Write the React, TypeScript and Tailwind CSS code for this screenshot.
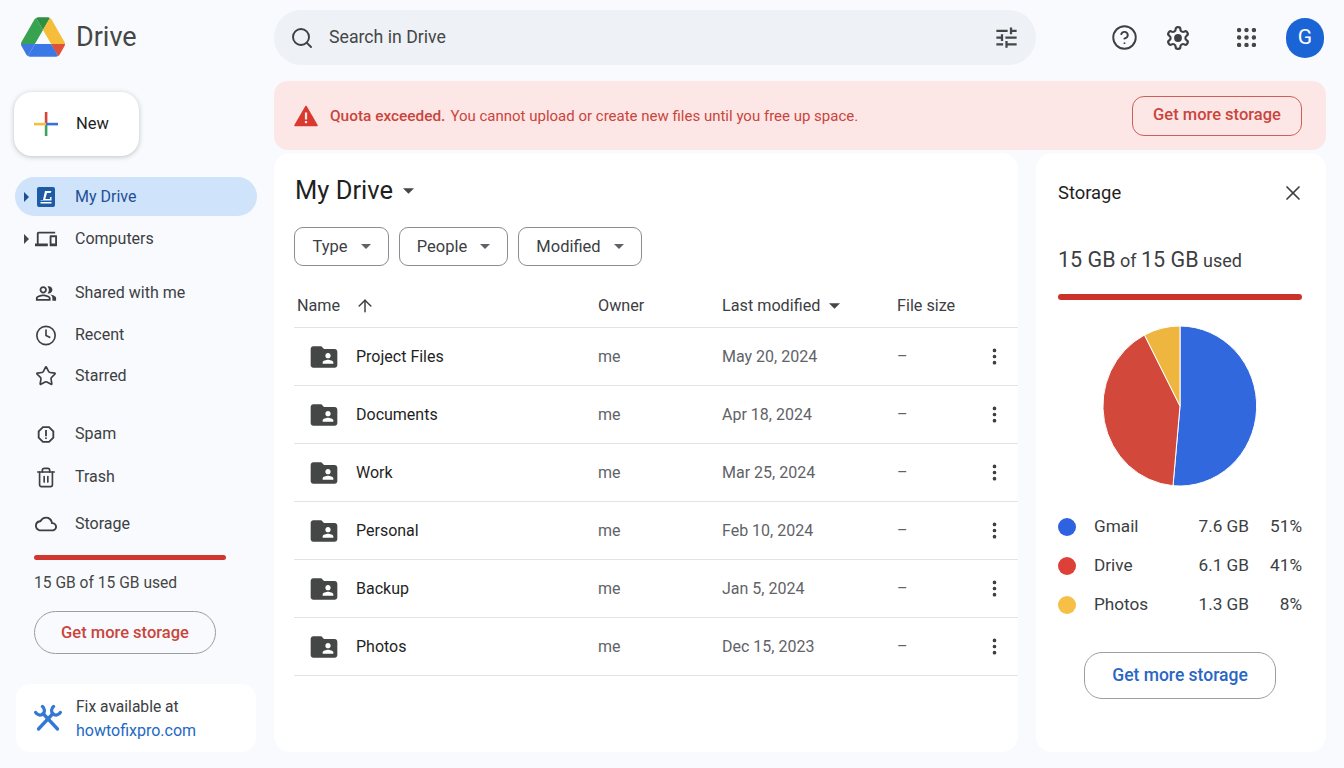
import React from 'react';
import { ArrowUp, CircleHelp, Clock, EllipsisVertical, Search, Star, Trash2, X } from 'lucide-react';
import { MdFolderShared, MdOutlineCloud, MdOutlineDevices, MdOutlinePeopleAlt, MdOutlineReport, MdTune } from 'react-icons/md';

const files = [
  { name: 'Project Files', modified: 'May 20, 2024' },
  { name: 'Documents', modified: 'Apr 18, 2024' },
  { name: 'Work', modified: 'Mar 25, 2024' },
  { name: 'Personal', modified: 'Feb 10, 2024' },
  { name: 'Backup', modified: 'Jan 5, 2024' },
  { name: 'Photos', modified: 'Dec 15, 2023' },
];

const usage = [
  { label: 'Gmail', size: '7.6 GB', pct: '51%', dot: 'bg-[#2f62e0]' },
  { label: 'Drive', size: '6.1 GB', pct: '41%', dot: 'bg-[#dc4037]' },
  { label: 'Photos', size: '1.3 GB', pct: '8%', dot: 'bg-[#f6bf45]' },
];

const Caret = ({ className = '' }: { className?: string }) => (
  <svg viewBox="0 0 10 5" className={className} fill="currentColor">
    <path d="M0 0h10L5 5z" />
  </svg>
);

const SideCaret = () => (
  <svg viewBox="0 0 5 10" className="w-[5px] h-[10px]" fill="currentColor">
    <path d="M0 0l5 5-5 5z" />
  </svg>
);

const DriveLogo = () => (
  <svg viewBox="0 0 87.3 78" className="w-[44px] h-[40px]">
    <path d="m6.6 66.85 3.85 6.65c.8 1.4 1.95 2.5 3.3 3.3l13.75-23.8h-27.5c0 1.55.4 3.1 1.2 4.5z" fill="#3f78e0" />
    <path d="m43.65 25-13.75-23.8c-1.35.8-2.5 1.9-3.3 3.3l-25.4 44a9.06 9.06 0 0 0 -1.2 4.5h27.5z" fill="#37a24f" />
    <path d="m73.55 76.8c1.35-.8 2.5-1.9 3.3-3.3l1.6-2.75 7.65-13.25c.8-1.4 1.2-2.95 1.2-4.5h-27.502l5.852 11.5z" fill="#df5138" />
    <path d="m43.65 25 13.75-23.8c-1.35-.8-2.9-1.2-4.5-1.2h-18.5c-1.6 0-3.15.45-4.5 1.2z" fill="#2f8f40" />
    <path d="m59.8 53h-32.3l-13.75 23.8c1.35.8 2.9 1.2 4.5 1.2h50.8c1.6 0 3.15-.45 4.5-1.2z" fill="#3b78e7" />
    <path d="m73.4 26.5-12.7-22c-.8-1.4-1.95-2.5-3.3-3.3l-13.75 23.8 16.15 28h27.45c0-1.55-.4-3.1-1.2-4.5z" fill="#f6bd3b" />
  </svg>
);

const ColorPlus = () => (
  <svg viewBox="0 0 24 24" className="w-[24px] h-[24px]">
    <rect x="10.8" y="0" width="2.6" height="12" fill="#d6453a" />
    <rect x="10.8" y="12" width="2.6" height="12" fill="#3fa45b" />
    <rect x="0" y="10.8" width="12" height="2.6" fill="#f2bf42" />
    <rect x="12" y="10.8" width="12" height="2.6" fill="#3d6fd8" />
  </svg>
);

const MyDriveIcon = () => (
  <svg viewBox="0 0 18 20" className="w-[18px] h-[20px]">
    <rect width="18" height="20" rx="2" fill="#1f5aa6" />
    <path d="M8 4h6.500l-1 2H10L8.300 12H13v-2h1.500v3.500H3.500V15H14.500v1.500H3.500v-3.500H6z" fill="#fff" />
  </svg>
);

const GearIcon = () => (
  <svg viewBox="0 0 24 24" className="w-[26px] h-[26px]" fill="none" stroke="currentColor" strokeWidth="2">
    <path d="M12.22 2h-.44a2 2 0 0 0-2 2v.18a2 2 0 0 1-1 1.73l-.43.25a2 2 0 0 1-2 0l-.15-.08a2 2 0 0 0-2.73.73l-.22.38a2 2 0 0 0 .73 2.73l.15.1a2 2 0 0 1 1 1.72v.51a2 2 0 0 1-1 1.74l-.15.09a2 2 0 0 0-.73 2.73l.22.38a2 2 0 0 0 2.73.73l.15-.08a2 2 0 0 1 2 0l.43.25a2 2 0 0 1 1 1.73V20a2 2 0 0 0 2 2h.44a2 2 0 0 0 2-2v-.18a2 2 0 0 1 1-1.73l.43-.25a2 2 0 0 1 2 0l.15.08a2 2 0 0 0 2.73-.73l.22-.39a2 2 0 0 0-.73-2.73l-.15-.08a2 2 0 0 1-1-1.74v-.5a2 2 0 0 1 1-1.74l.15-.09a2 2 0 0 0 .73-2.73l-.22-.38a2 2 0 0 0-2.73-.73l-.15.08a2 2 0 0 1-2 0l-.43-.25a2 2 0 0 1-1-1.73V4a2 2 0 0 0-2-2z" />
    <circle cx="12" cy="12" r="3.6" fill="currentColor" stroke="none" />
  </svg>
);

const AppsIcon = () => (
  <svg viewBox="0 0 18 18" className="w-[19px] h-[19px]" fill="currentColor">
    {[2, 9, 16].map(y => [2, 9, 16].map(x => <circle key={`${x}-${y}`} cx={x} cy={y} r="2.1" />))}
  </svg>
);

const WarningIcon = () => (
  <svg viewBox="0 0 24 22" className="w-[24px] h-[22px]">
    <path d="M12 1.5 23 20.5H1z" fill="#d93a30" stroke="#d93a30" strokeWidth="1.5" strokeLinejoin="round" />
    <rect x="10.9" y="7.5" width="2.2" height="7" fill="#fde7e6" />
    <rect x="10.9" y="16" width="2.2" height="2.2" fill="#fde7e6" />
  </svg>
);

const ToolsIcon = () => (
  <svg viewBox="0 0 28 28" className="w-[28px] h-[28px]" fill="none" stroke="#3478d4" strokeWidth="3.3" strokeLinecap="round">
    <path d="M4.500 25 L19 9.500" />
    <path d="M23.500 25 L9 9.500" />
    <path d="M19.500 2.500c-2.500 2-2.500 5.500-.5 7.500 2.300 1.800 5.800 1.200 7.300-1.500" />
    <path d="M8.500 2.500c2.500 2 2.500 5.500.5 7.500-2.300 1.800-5.800 1.200-7.300-1.500" />
  </svg>
);

const StoragePie = () => (
  <svg viewBox="-78 -81 156 162" className="w-[156px] h-[162px]">
    <path d="M0 0L0-80A77 80 0 1 1-7 79.700Z" fill="#3268dd" stroke="#fff" />
    <path d="M0 0L-7 79.700A77 80 0 0 1-35.500-71Z" fill="#d2493c" stroke="#fff" />
    <path d="M0 0L-35.500-71A77 80 0 0 1 0-80Z" fill="#efb63f" stroke="#fff" />
  </svg>
);

const NavRow = ({ icon, label, caret, height }: { icon: React.ReactNode; label: string; caret?: boolean; height: string }) => (
  <div className={`flex items-center ml-[15px] ${height}`}>
    <span className="w-[20px] pl-[9px] text-[#444746]">{caret && <SideCaret />}</span>
    <span className="w-[22px] flex justify-center text-[#3c4043]">{icon}</span>
    <span className="ml-[18px] text-[#3c4043]">{label}</span>
  </div>
);

const FilterChip = ({ label, width }: { label: string; width: string }) => (
  <div className={`h-[39px] flex items-center justify-center gap-[13px] rounded-[9px] border border-[#8a8d91] text-[16.5px] text-[#3c4043] ${width}`}>
    <span className="pt-[1px]">{label}</span>
    <Caret className="w-[10px] h-[5px] text-[#5f6368]" />
  </div>
);

export default function App() {
  return (
    <div className="w-[1344px] h-[768px] flex overflow-hidden bg-[#f8fafd] text-[16px] text-[#1f1f1f] font-['Roboto',sans-serif]">
      {/* Sidebar */}
      <aside className="w-[274px] shrink-0 flex flex-col">
        <div className="flex items-center pl-[21px] pt-[17px] h-[57px]">
          <DriveLogo />
          <span className="ml-[11px] pt-[1px] text-[27px] text-[#444746]">Drive</span>
        </div>
        <button className="mt-[35px] ml-[14px] w-[125px] h-[64px] flex items-center pl-[20px] rounded-[18px] bg-white shadow-[0_1px_5px_rgba(60,64,67,0.3)] text-[16.5px] text-[#1f1f1f]">
          <ColorPlus />
          <span className="ml-[18px]">New</span>
        </button>

        <div className="mt-[21px] ml-[15px] w-[242px] h-[39px] flex items-center rounded-full bg-[#cfe3fa] text-[#1f4f96]">
          <span className="w-[20px] pl-[9px]"><SideCaret /></span>
          <span className="w-[22px] flex justify-center"><MyDriveIcon /></span>
          <span className="ml-[18px]">My Drive</span>
        </div>
        <NavRow icon={<MdOutlineDevices size={26} />} label="Computers" caret height="h-[46px]" />

        <div className="mt-[10px]">
          <NavRow icon={<MdOutlinePeopleAlt size={27} />} label="Shared with me" height="h-[42px]" />
          <NavRow icon={<Clock size={23} strokeWidth={1.8} />} label="Recent" height="h-[42px]" />
          <NavRow icon={<Star size={22} strokeWidth={1.8} />} label="Starred" height="h-[40px]" />
        </div>
        <div className="mt-[17px]">
          <NavRow icon={<MdOutlineReport size={27} />} label="Spam" height="h-[42px]" />
          <NavRow icon={<Trash2 size={23} strokeWidth={1.8} />} label="Trash" height="h-[44px]" />
          <NavRow icon={<MdOutlineCloud size={26} />} label="Storage" height="h-[50px]" />
        </div>

        <div className="mt-[6px] ml-[34px] w-[192px] h-[5px] rounded-full bg-[#d2372f]" />
        <p className="mt-[12px] ml-[34px] text-[15.6px] text-[#444746]">15 GB of 15 GB used</p>
        <button className="mt-[16px] ml-[34px] w-[182px] h-[43px] rounded-full border border-[#9a9da1] text-[16.5px] text-[#c9453c] font-medium">
          Get more storage
        </button>
        <div className="mt-[30px] ml-[16px] w-[240px] h-[68px] flex items-center pl-[18px] rounded-[14px] bg-white">
          <ToolsIcon />
          <div className="ml-[14px] pt-[1px] leading-[23px]">
            <div className="text-[15.6px] text-[#3c4043]">Fix available at</div>
            <div className="text-[#2368c4]">howtofixpro.com</div>
          </div>
        </div>
      </aside>

      {/* Main column */}
      <div className="w-[1052px] shrink-0 flex flex-col">
        <div className="flex items-center pt-[10px]">
          <div className="w-[762px] h-[55px] flex items-center pl-[16px] pr-[16px] rounded-full bg-[#eef1f6]">
            <Search size={24} strokeWidth={1.9} className="text-[#3c4043]" />
            <span className="ml-[15px] text-[17.7px] text-[#444746]">Search in Drive</span>
            <MdTune size={27} className="ml-auto text-[#444746]" />
          </div>
          <CircleHelp size={27} strokeWidth={1.7} className="ml-[75px] text-[#3c4043]" />
          <span className="ml-[27px] text-[#3c4043]"><GearIcon /></span>
          <span className="ml-[46px] text-[#444746]"><AppsIcon /></span>
          <div className="ml-[30px] w-[38px] h-[40px] flex items-center justify-center rounded-full bg-[#1a64d6] text-[#fff] text-[21px]">G</div>
        </div>

        <div className="mt-[16px] h-[69px] flex items-center pl-[20px] pr-[24px] rounded-[14px] bg-[#fde7e6] text-[#c9453c]">
          <WarningIcon />
          <span className="ml-[12px] pt-[2px] text-[15.4px] font-medium">Quota exceeded.</span>
          <span className="ml-[5px] pt-[2px] text-[15px]">You cannot upload or create new files until you free up space.</span>
          <button className="ml-auto w-[170px] h-[40px] rounded-[12px] border border-[#c9605a] text-[16.5px] font-medium">Get more storage</button>
        </div>

        <div className="mt-[3px] h-[599px] flex gap-[18px]">
          {/* File list */}
          <main className="w-[744px] rounded-[16px] bg-white pl-[20px]">
            <div className="h-[74px] flex items-center pt-[1px] text-[25.5px] text-[#1f1f1f]">
              <span className="ml-[1px]">My Drive</span>
              <Caret className="ml-[10px] w-[11px] h-[6px] text-[#444746]" />
            </div>
            <div className="flex gap-[10px]">
              <FilterChip label="Type" width="w-[95px]" />
              <FilterChip label="People" width="w-[109px]" />
              <FilterChip label="Modified" width="w-[124px]" />
            </div>
            <div className="mt-[20px] h-[42px] flex items-center border-b border-[#e3e3e3] text-[16.2px] text-[#3c4043]">
              <div className="w-[304px] flex items-center pl-[3px]">
                Name
                <ArrowUp size={20} strokeWidth={1.8} className="ml-[15px]" />
              </div>
              <div className="w-[124px]">Owner</div>
              <div className="w-[175px] flex items-center">
                Last modified
                <Caret className="ml-[9px] w-[11px] h-[6px] text-[#444746]" />
              </div>
              <div>File size</div>
            </div>
            {files.map(file => (
              <div key={file.name} className="h-[58px] flex items-center border-b border-[#e3e3e3]">
                <div className="w-[304px] flex items-center pl-[14px]">
                  <MdFolderShared size={32} className="text-[#444746]" />
                  <span className="ml-[16px] text-[#1f1f1f]">{file.name}</span>
                </div>
                <div className="w-[124px] text-[#5f6368]">me</div>
                <div className="w-[175px] text-[#5f6368]">{file.modified}</div>
                <div className="w-[87px] text-[#5f6368]">–</div>
                <EllipsisVertical size={21} strokeWidth={2.2} className="text-[#3c4043]" />
              </div>
            ))}
          </main>

          {/* Storage details */}
          <section className="w-[290px] flex flex-col rounded-[16px] bg-white pl-[22px] pr-[24px]">
            <div className="h-[79px] flex items-center justify-between">
              <span className="text-[18.4px] text-[#1f1f1f]">Storage</span>
              <X size={24} strokeWidth={1.7} className="mr-[-3px] text-[#3c4043]" />
            </div>
            <p className="mt-[12px] leading-[32px] text-[18px] text-[#3c4043]">
              <span className="text-[21.5px]">15 GB</span> of <span className="text-[21.5px]">15 GB</span> used
            </p>
            <div className="mt-[17px] h-[6px] rounded-full bg-[#cc3229]" />
            <div className="mt-[25px] flex justify-center"><StoragePie /></div>
            <div className="mt-[20px]">
              {usage.map(row => (
                <div key={row.label} className="h-[39px] flex items-center text-[17.2px] text-[#3c4043]">
                  <span className={`w-[18px] h-[18px] rounded-full ${row.dot}`} />
                  <span className="ml-[18px]">{row.label}</span>
                  <span className="ml-auto">{row.size}</span>
                  <span className="w-[53px] text-right">{row.pct}</span>
                </div>
              ))}
            </div>
            <button className="mt-[28px] mx-auto w-[192px] h-[47px] rounded-[18px] border border-[#9a9da1] text-[17.5px] font-medium text-[#2a66c5]">
              Get more storage
            </button>
          </section>
        </div>
      </div>
    </div>
  );
}
